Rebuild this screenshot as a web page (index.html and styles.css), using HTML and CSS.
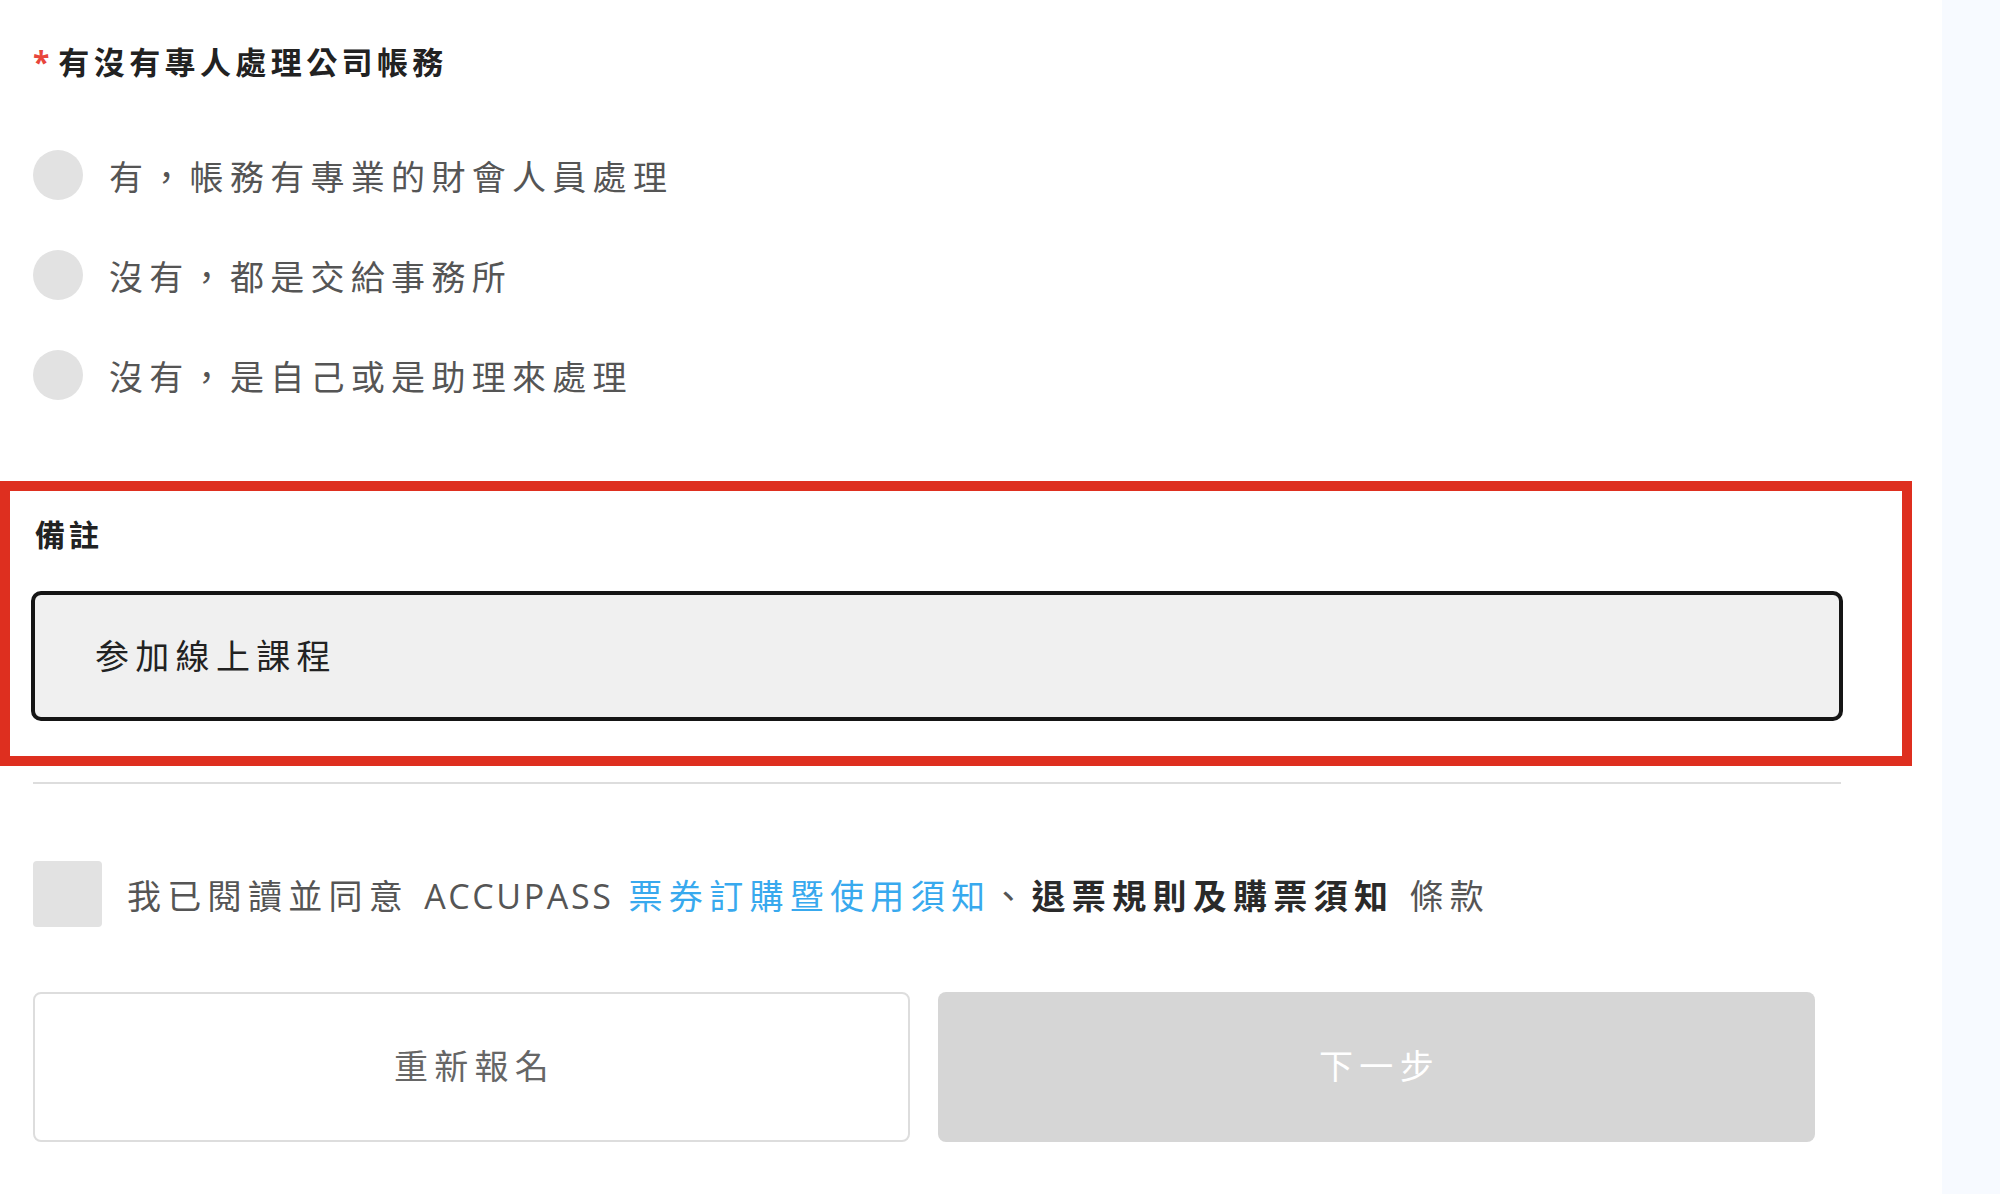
FILE: index.html
```html
<!DOCTYPE html>
<html lang="zh-Hant">
<head>
<meta charset="utf-8">
<title>報名表單</title>
<link rel="stylesheet" href="styles.css">
</head>
<body>
<div class="page">
  <main class="main">
    <section class="question">
      <h2 class="q-title"><span class="req">*</span>有沒有專人處理公司帳務</h2>
      <ul class="options">
        <li class="option"><span class="radio"></span><span class="opt-text">有，帳務有專業的財會人員處理</span></li>
        <li class="option"><span class="radio"></span><span class="opt-text">沒有，都是交給事務所</span></li>
        <li class="option"><span class="radio"></span><span class="opt-text">沒有，是自己或是助理來處理</span></li>
      </ul>
    </section>

    <section class="highlight">
      <div class="field-label">備註</div>
      <div class="text-input">参加線上課程</div>
    </section>

    <hr class="divider">

    <div class="agree">
      <span class="checkbox"></span>
      <p class="agree-text">我已閱讀並同意 <span class="latin">ACCUPASS</span> <a class="link" href="#">票券訂購暨使用須知</a>、<b class="strong">退票規則及購票須知</b> 條款</p>
    </div>

    <div class="actions">
      <button class="btn btn-outline" type="button">重新報名</button>
      <button class="btn btn-disabled" type="button">下一步</button>
    </div>
  </main>
  <aside class="strip"></aside>
</div>
</body>
</html>
```

FILE: styles.css
```css
* {
  box-sizing: border-box;
}

html, body {
  margin: 0;
  padding: 0;
  background: #ffffff;
}

body {
  font-family: "Open Sans", "Noto Sans CJK TC", sans-serif;
  color: #555555;
  font-size: 34px;
}

.page {
  display: flex;
  width: 2000px;
  height: 1194px;
  overflow: hidden;
}

.main {
  flex: 1;
  padding: 42px 0 0 33px;
  background: #ffffff;
}

.strip {
  width: 58px;
  background: #f7faff;
}

.q-title {
  margin: 0;
  font-size: 31px;
  line-height: 40px;
  font-weight: 700;
  color: #222222;
  letter-spacing: 4.4px;
  display: flex;
  align-items: center;
}

.req {
  color: #e8453c;
  font-size: 30px;
  margin-right: 9px;
  letter-spacing: 0;
}

.options {
  list-style: none;
  margin: 43px 0 0 0;
  padding: 0;
}

.option {
  display: flex;
  align-items: center;
  height: 100px;
}

.radio {
  width: 50px;
  height: 50px;
  border-radius: 50%;
  background: #e2e2e2;
  flex: none;
}

.opt-text {
  margin-left: 26px;
  font-size: 34px;
  letter-spacing: 6.3px;
  color: #555555;
}

.highlight {
  margin: 56px 0 0 -33px;
  width: 1912px;
  border: 10px solid #de2f1f;
  padding: 24px 0 35px 21px;
}

.field-label {
  font-size: 30px;
  line-height: 40px;
  font-weight: 700;
  color: #222222;
  letter-spacing: 4px;
  padding-left: 4px;
}

.text-input {
  margin-top: 36px;
  width: 1812px;
  height: 130px;
  border: 4px solid #151515;
  border-radius: 10px;
  background: #f0f0f0;
  padding: 0 0 4px 60px;
  display: flex;
  align-items: center;
  font-size: 34px;
  letter-spacing: 6.3px;
  color: #222222;
}

.divider {
  margin: 16px 0 0 0;
  width: 1808px;
  border: 0;
  height: 2px;
  background: #dddddd;
}

.agree {
  margin-top: 77px;
  display: flex;
  align-items: center;
}

.checkbox {
  width: 69px;
  height: 66px;
  border-radius: 4px;
  background: #e2e2e2;
  flex: none;
}

.agree-text {
  margin: 0 0 0 25px;
  font-size: 34px;
  letter-spacing: 6.3px;
  color: #555555;
  white-space: nowrap;
}

.latin {
  letter-spacing: 2.6px;
}

.link {
  color: #38a9ee;
  text-decoration: none;
}

.strong {
  color: #2a2a2a;
  font-weight: 700;
}

.actions {
  margin-top: 65px;
  display: flex;
  gap: 28px;
}

.btn {
  width: 877px;
  height: 150px;
  border-radius: 8px;
  font-family: "Open Sans", "Noto Sans CJK TC", sans-serif;
  font-size: 34px;
  letter-spacing: 6.3px;
  padding: 0 0 6px 6px;
  cursor: pointer;
}

.btn-outline {
  background: #ffffff;
  border: 2px solid #dddddd;
  color: #666666;
}

.btn-disabled {
  background: #d6d6d6;
  border: 0;
  color: #ffffff;
}
```
